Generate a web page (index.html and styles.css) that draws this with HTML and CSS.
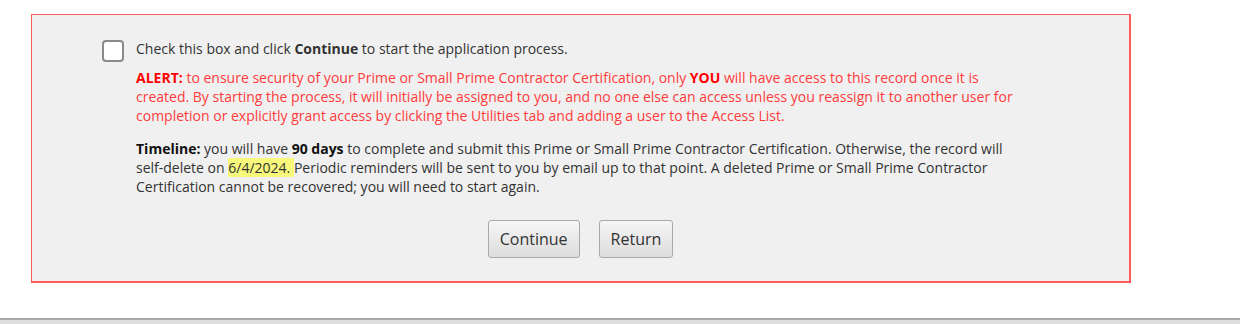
FILE: index.html
```html
<!DOCTYPE html>
<html lang="en">
<head>
    <meta charset="utf-8" />
    <title>Start Application</title>
    <link rel="stylesheet" href="styles.css">
</head>
<body>

    <div class="start-box">
        <div class="check-row">
            <span class="checkbox"></span>
            <div class="check-text">
                <p class="intro">Check this box and click <b>Continue</b> to start the application process.</p>
                <p class="alert"><b>ALERT:</b> to ensure security of your Prime or Small Prime Contractor Certification, only <b>YOU</b> will have access to this record once it is created. By starting the process, it will initially be assigned to you, and no one else can access unless you reassign it to another user for completion or explicitly grant access by clicking the Utilities tab and adding a user to the Access List.</p>
                <p class="timeline"><b>Timeline:</b> you will have <b>90 days</b> to complete and submit this Prime or Small Prime Contractor Certification. Otherwise, the record will self-delete on <span class="hilite">6/4/2024. </span>Periodic reminders will be sent to you by email up to that point. A deleted Prime or Small Prime Contractor Certification cannot be recovered; you will need to start again.</p>
            </div>
        </div>

        <div class="buttons">
            <button>Continue</button>
            <button>Return</button>
        </div>
    </div>

    <div class="footer-bar"></div>

</body>
</html>
```

FILE: styles.css
```css
body {
    margin: 0;
    font-family: 'Open Sans', 'Noto Sans', sans-serif;
    font-size: 14px;
    color: #333;
    background-color: #fff;
}

.start-box {
    margin: 14px 0 0 31px;
    width: 1097px;
    background-color: #f0f0f0;
    border: 1px solid #ff5c5c;
    border-right-width: 2px;
    border-bottom-width: 2px;
    padding: 24px 0 23px 0;
}

.check-row {
    display: flex;
    align-items: flex-start;
    padding-left: 70px;
}

.checkbox {
    width: 18px;
    height: 18px;
    margin-top: 1px;
    margin-right: 12px;
    border: 2px solid #8a8a8a;
    border-radius: 4px;
    background-color: #fff;
    flex-shrink: 0;
}

.check-text {
    width: 890px;
}

p {
    margin: 0;
    line-height: 19px;
}

.alert {
    margin-top: 10px;
    color: #ff3b3b;
}

    .alert b {
        color: #f00;
    }

.timeline {
    margin-top: 14px;
}

    .timeline b {
        color: #111;
    }

.hilite {
    background-color: #f8f87a;
}

.buttons {
    display: flex;
    justify-content: center;
    gap: 19px;
    margin-top: 24px;
}

button {
    height: 38px;
    padding: 0 11px;
    font-family: 'Open Sans', 'Noto Sans', sans-serif;
    font-size: 16px;
    color: #333;
    background: linear-gradient(#f6f6f6, #dcdcdc);
    border: 1px solid #a9a9a9;
    border-radius: 3px;
    cursor: pointer;
}

.footer-bar {
    margin-top: 35px;
    height: 5px;
    border-top: 2px solid #a8a8a8;
    background-color: #dedede;
}
```
